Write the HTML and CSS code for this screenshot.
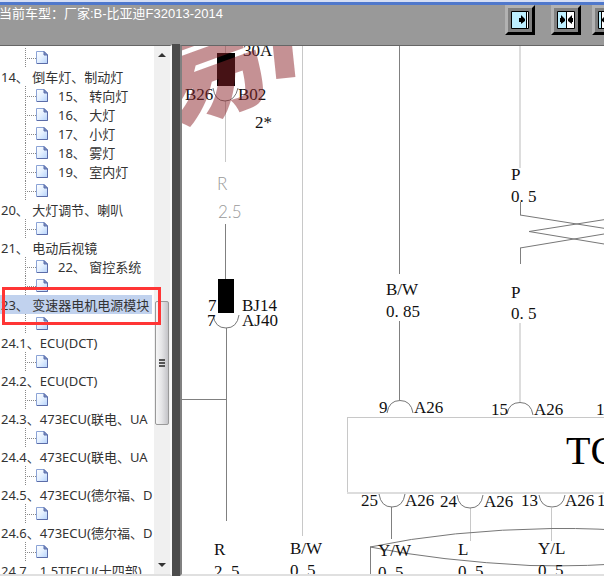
FILE: index.html
```html
<!DOCTYPE html>
<html lang="zh-CN">
<head>
<meta charset="utf-8">
<title>比亚迪F3 电路图</title>
<link rel="stylesheet" href="styles.css">
</head>
<body>
<svg class="defs" aria-hidden="true">
  <defs>
    <linearGradient id="paper" x1="0" y1="0" x2="1" y2="1">
      <stop offset="0" stop-color="#ffffff"/><stop offset=".5" stop-color="#e4f0ff"/><stop offset="1" stop-color="#b4d2fb"/>
    </linearGradient>
    <symbol id="page" viewBox="0 0 12 14">
      <path d="M.5 .5H8L11.500 4V12.500H.5Z" fill="url(#paper)" stroke="#8ba3d6"/>
      <path d="M11.500 4V12.500H1" fill="none" stroke="#5b6ca8"/>
      <path d="M8 .5L11.500 4H8Z" fill="#7d93c8" stroke="#5b6ca8"/>
    </symbol>
  </defs>
</svg>
<header class="top">
  <h1 class="title">当前车型：厂家:B-比亚迪F32013-2014</h1>
  <div class="tools">
    <button class="tool" aria-label="展开左侧"><svg width="18" height="18"><path d="M.5.5H17.5V17.5H.5Z" fill="#bdefff" stroke="#000"/><path d="M15 1H17V17H15Z" fill="#fff"/><path d="M15.500 1V17" stroke="#000"/><path d="M8 7H10V4L14 8V10L10 13V11H8Z"/></svg></button>
    <button class="tool" aria-label="居中"><svg width="18" height="18"><path d="M.5.5H17.5V17.5H.5Z" fill="#fff" stroke="#000"/><path d="M1 1H9V17H1Z" fill="#bdefff"/><path d="M9.500 1V17" stroke="#000"/><path d="M3 7H4V4L8 8V10L4 13V11H3ZM16 7H15V4L11 8V10L15 13V11H16Z"/></svg></button>
    <button class="tool last" aria-label="展开右侧"><svg width="18" height="18"><path d="M.5.5H17.5V17.5H.5Z" fill="#fff" stroke="#000"/><path d="M1 1H3V17H1Z" fill="#bdefff"/><path d="M3.500 1V17" stroke="#000"/><path d="M10 7H8V4L4 8V10L8 13V11H10Z"/></svg></button>
  </div>
</header>
<main class="panes">
  <nav class="side">
    <ul class="tree">
      <li class="leaf"><svg class="icon"><use href="#page"/></svg></li>
      <li><a href="#">14、 倒车灯、制动灯</a></li>
      <li class="leaf"><svg class="icon"><use href="#page"/></svg><a href="#">15、 转向灯</a></li>
      <li class="leaf"><svg class="icon"><use href="#page"/></svg><a href="#">16、 大灯</a></li>
      <li class="leaf"><svg class="icon"><use href="#page"/></svg><a href="#">17、 小灯</a></li>
      <li class="leaf"><svg class="icon"><use href="#page"/></svg><a href="#">18、 雾灯</a></li>
      <li class="leaf"><svg class="icon"><use href="#page"/></svg><a href="#">19、 室内灯</a></li>
      <li class="leaf"><svg class="icon"><use href="#page"/></svg></li>
      <li><a href="#">20、 大灯调节、喇叭</a></li>
      <li class="leaf"><svg class="icon"><use href="#page"/></svg></li>
      <li><a href="#">21、 电动后视镜</a></li>
      <li class="leaf"><svg class="icon"><use href="#page"/></svg><a href="#">22、 窗控系统</a></li>
      <li class="leaf"><svg class="icon"><use href="#page"/></svg></li>
      <li class="selected"><a href="#">23、 变速器电机电源模块</a></li>
      <li class="leaf"><svg class="icon"><use href="#page"/></svg></li>
      <li><a href="#">24.1、ECU(DCT)</a></li>
      <li class="leaf"><svg class="icon"><use href="#page"/></svg></li>
      <li><a href="#">24.2、ECU(DCT)</a></li>
      <li class="leaf"><svg class="icon"><use href="#page"/></svg></li>
      <li><a href="#">24.3、473ECU(联电、UA</a></li>
      <li class="leaf"><svg class="icon"><use href="#page"/></svg></li>
      <li><a href="#">24.4、473ECU(联电、UA</a></li>
      <li class="leaf"><svg class="icon"><use href="#page"/></svg></li>
      <li><a href="#">24.5、473ECU(德尔福、D</a></li>
      <li class="leaf"><svg class="icon"><use href="#page"/></svg></li>
      <li><a href="#">24.6、473ECU(德尔福、D</a></li>
      <li class="leaf"><svg class="icon"><use href="#page"/></svg></li>
      <li><a href="#">24.7、1.5TIECU(十四部)</a></li>
    </ul>
    <div class="scroll">
      <button class="arrow" aria-label="向上"><svg width="8" height="4"><path d="M0 4L4 0L8 4Z" fill="#333"/></svg></button>
      <div class="track-before"></div>
      <div class="thumb"><i></i><i></i><i></i></div>
      <div class="track-after"></div>
      <button class="arrow" aria-label="向下"><svg width="8" height="4"><path d="M0 0L4 4L8 0Z" fill="#333"/></svg></button>
    </div>
    <div class="mark"></div>
  </nav>
  <div class="splitter"></div>
  <section class="canvas">
    <svg class="diagram" width="640" height="640" viewBox="182 46 640 640">
      <g class="fuse">
        <path d="M217 53H235V86H217Z"/>
        <path d="M218 279H234V313H218Z"/>
      </g>
      <g class="wire pale" shape-rendering="crispEdges">
        <path d="M225.500 46V53M225.500 101V162M302.500 46V536M470.500 508V541M551.500 508V541"/>
        <path class="double" d="M520 46V168M520 323V402"/>
        <path d="M347.500 417.500H640M347.500 417V493"/>
        <path class="double" d="M347 493H640"/>
      </g>
      <g class="wire" shape-rendering="crispEdges">
        <path d="M225.500 224V279M226.500 328V521M182 399.500H226M399.500 46V274M399.500 321V400M520.500 202V215M520.500 248V264M391.500 507V539M370.500 547V640"/>
      </g>
      <g class="wire fine">
        <path d="M213 88Q215 101 225 101T238 88"/>
        <path d="M213 315Q215 328 226 328T239 315"/>
        <path d="M387 413Q389 400.500 400 400.500T413 413"/>
        <path d="M507 414Q509 402.500 520 402.500T533 415"/>
        <path d="M379 494Q381 507 392 507T405 494"/>
        <path d="M457 495Q459 508 470 508T483 495"/>
        <path d="M539 495Q541 507 552 507T565 495"/>
        <path d="M520 215L640 234M640 214L529 231.500L640 250M520 248L640 228"/>
        <path d="M370 547Q450 530 552 528.500Q600 528 640 532M370 547Q440 561 530 565.500Q590 567 640 562"/>
      </g>
      <g class="label">
        <text x="243" y="56">30A</text>
        <text x="185" y="100">B26</text>
        <text x="238" y="100">B02</text>
        <text x="255" y="128">2*</text>
        <text x="208" y="311">7</text>
        <text x="207" y="326">7</text>
        <text x="242" y="311">BJ14</text>
        <text x="242" y="326">AJ40</text>
        <text x="386" y="295">B/W</text>
        <text x="386" y="317">0. 85</text>
        <text x="511" y="180">P</text>
        <text x="511" y="202">0. 5</text>
        <text x="511" y="298">P</text>
        <text x="511" y="319">0. 5</text>
        <text x="379" y="413">9</text>
        <text x="414" y="413">A26</text>
        <text x="491" y="415">15</text>
        <text x="534" y="415">A26</text>
        <text x="596" y="415">14</text>
        <text x="361" y="506">25</text>
        <text x="405" y="506">A26</text>
        <text x="440" y="507">24</text>
        <text x="484" y="507">A26</text>
        <text x="521" y="506">13</text>
        <text x="565" y="506">A26</text>
        <text x="597" y="506">12</text>
        <text x="214" y="555">R</text>
        <text x="214" y="577">2. 5</text>
        <text x="290" y="554">B/W</text>
        <text x="290" y="576">0. 5</text>
        <text x="378" y="556">Y/W</text>
        <text x="378" y="578">0. 5</text>
        <text x="458" y="555">L</text>
        <text x="458" y="577">0. 5</text>
        <text x="538" y="554">Y/L</text>
        <text x="538" y="576">0. 5</text>
      </g>
      <g class="plain">
        <text x="217" y="190">R</text>
        <text x="218" y="218">2.5</text>
      </g>
      <text class="unit" x="566" y="464">TCU</text>
      <text class="watermark" transform="translate(165 127) rotate(-20)">易</text>
      <text class="watermark" transform="translate(225 73) rotate(-6)">丨</text>
    </svg>
  </section>
</main>
</body>
</html>
```

FILE: styles.css
```css
* { box-sizing: border-box; }
body {
  margin: 0;
  height: 100vh;
  overflow: hidden;
  display: flex;
  flex-direction: column;
  background: #f4f4f4;
  font: 13px/19px "Noto Sans", "Noto Sans CJK SC", sans-serif;
  color: #333;
}
.defs { position: absolute; width: 0; height: 0; }

.top {
  flex: none;
  display: flex;
  height: 44px;
  background: #999;
  border-top: 2px solid #d4def5;
  box-shadow: inset 0 3px #4f78cc;
  padding-top: 3px;
}
.title {
  flex: 1;
  margin: 0 0 0 -1px;
  font: 13px/17px "Liberation Sans", "Noto Sans CJK SC", sans-serif;
  color: #fff;
  white-space: nowrap;
}
.tools {
  flex: 0 0 99px;
  display: flex;
  gap: 16px;
  overflow: hidden;
}
.tool {
  flex: none;
  width: 30px;
  height: 30px;
  padding: 3px;
  border: 3px solid;
  border-color: #b2b2b2 #000 #000 #b2b2b2;
  background: #808080;
}
.tool svg { display: block; }
.last { margin-left: -5px; }

.panes { flex: 1; min-height: 0; display: flex; background: #999; }
.side {
  position: relative;
  flex: 0 0 172px;
  display: flex;
  margin-top: 1px;
  background: #fff;
  border-top: 1px solid #666;
  border-right: 2px solid #fafafa;
  border-bottom: 2px solid #e0e0e0;
}
.tree {
  flex: 1;
  min-width: 0;
  margin: 0;
  padding: 2px 0 0;
  list-style: none;
  overflow: hidden;
}
.tree li { display: flex; height: 19px; white-space: nowrap; }
.tree a { padding-left: 1px; line-height: 20px; color: inherit; text-decoration: none; }
.tree .leaf {
  margin-left: 25px;
  align-items: center;
  background:
    repeating-linear-gradient(to bottom, #888 0 1px, transparent 1px 2px) 0 0 / 1px 100% no-repeat,
    repeating-linear-gradient(to right, #888 0 1px, transparent 1px 2px) 0 10px / 11px 1px no-repeat;
}
.icon { width: 12px; height: 14px; margin: 0 9px 0 11px; }
.tree .selected { margin-right: 2px; background: #c1d2ee; }

.scroll {
  flex: 0 0 16px;
  display: flex;
  flex-direction: column;
  background: #f0f0f0;
}
.arrow {
  display: grid;
  place-items: center;
  height: 18px;
  padding: 0;
  border: 0;
  background: none;
}
.track-before { flex: 238; }
.track-after { flex: 132; }
.thumb {
  flex: 123;
  display: flex;
  flex-direction: column;
  justify-content: center;
  gap: 1px;
  margin: 0 1px;
  padding: 0 3px;
  border: 1px solid #999;
  border-radius: 2px;
  background: linear-gradient(to right, #f6f6f6, #e6e6e8 45%, #c4c4c8);
}
.thumb i { height: 2px; background: #555; }
.mark {
  position: absolute;
  top: 241px;
  left: 2px;
  width: 159px;
  height: 38px;
  border: 3px solid #ff3535;
}

.splitter { flex: 0 0 8px; background: #4d4d4d; }
.canvas {
  flex: 1;
  min-width: 0;
  margin-top: 1px;
  background: #fff;
  border-top: 1px solid #666;
  border-left: 2px solid #808080;
  border-bottom: 2px solid #e0e0e0;
  overflow: hidden;
}
.diagram { display: block; }
.wire { fill: none; stroke: #808080; stroke-width: 1px; }
.pale { stroke: #c8c8c8; }
.double { stroke: #ddd; stroke-width: 2px; }
.fine { stroke: #777; }
.label { font: 17px "Liberation Serif", serif; fill: #111; white-space: pre; }
.plain { font: 300 17px Lato, "Open Sans", sans-serif; fill: #999; }
.unit { font: 40px "Liberation Serif", serif; fill: #000; }
.watermark { font: 900 120px "Noto Sans CJK SC", sans-serif; fill: #8c2329; fill-opacity: .5; }
```
